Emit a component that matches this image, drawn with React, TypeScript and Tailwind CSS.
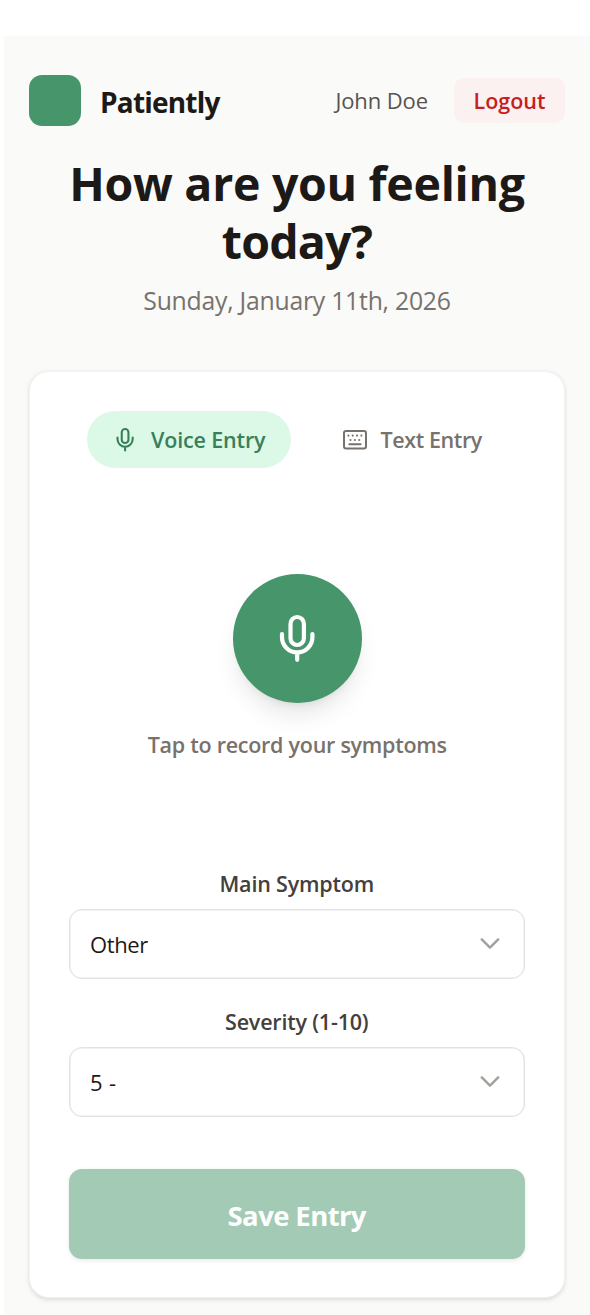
type IconProps = { className?: string };

function Microphone({ className }: IconProps) {
  return (
    <svg viewBox="0 0 52 52" fill="none" stroke="currentColor" strokeWidth="4.2" strokeLinecap="round" className={className}>
      <rect x="19.5" y="4" width="13.4" height="28" rx="6.7" />
      <path d="M11 21v3.2a15.2 15.2 0 0 0 30.4 0V21M26.2 40v6.8" />
    </svg>
  );
}

function Keyboard({ className }: IconProps) {
  return (
    <svg viewBox="0 0 24 20" fill="none" stroke="currentColor" strokeLinecap="round" className={className}>
      <rect x="1" y="1" width="22" height="17.6" rx="2" strokeWidth="2" />
      <path strokeWidth="2.1" d="M5.4 5.6h.01M9.7 5.6h.01M14 5.6h.01M18.4 5.6h.01M7.5 10h.01M11.9 10h.01M16.3 10h.01" />
      <path strokeWidth="1.9" d="M6.3 14.2h11.3" />
    </svg>
  );
}

function Field({ label, value, valueClass }: { label: string; value: string; valueClass: string }) {
  return (
    <div className="flex flex-col items-center">
      <label className="h-[34px] text-[21.5px] leading-[34px] font-semibold tracking-[-0.2px] whitespace-nowrap text-[#44403c]">{label}</label>
      <button className="mt-[8px] flex h-[70px] w-full items-center justify-between rounded-[13px] border border-[#e2e2e1] bg-white pr-[24px] pl-[20px] text-left text-[22px] text-[#1c1917] shadow-[inset_0_0_0_0.5px_#e5e5e5]">
        <span className={valueClass}>{value}</span>
        <svg viewBox="0 0 20 12" fill="none" stroke="#a3a09b" strokeWidth="2.4" strokeLinecap="round" strokeLinejoin="round" className="h-3 w-5">
          <path d="M1.8 1.4 10 9.6l8.2-8.2" />
        </svg>
      </button>
    </div>
  );
}

export default function App() {
  return (
    <div className="h-[1315px] overflow-hidden bg-white pt-[36px] pl-[4px] font-['Open_Sans','Noto_Sans',sans-serif]">
      <main className="h-full bg-[#fafaf9] pt-[38.5px] pr-[25px] pl-[25px]">
        <header className="flex h-[52px] items-center justify-between">
          <div className="flex items-center gap-[19.5px]">
            <div className="size-[51.5px] rounded-[13px] bg-[#47956b]" />
            <span className="pt-[2px] text-[28px] leading-[40px] font-bold tracking-[-0.8px] text-[#1c1917]">Patiently</span>
          </div>
          <div className="flex items-center gap-[26px]">
            <span className="pb-px text-[22px] tracking-[-0.1px] text-[#57534e]">John Doe</span>
            <button className="h-[45px] w-[111px] rounded-[10px] bg-[#fcf1f1] pt-[2px] text-[21.5px] font-semibold text-[#c81e1e]">Logout</button>
          </div>
        </header>
        <div className="mt-[28.5px] text-center">
          <h1 className="text-[46.5px] leading-[57.6px] font-bold tracking-[-0.3px] text-[#1c1917]">
            How are you feeling <span className="tracking-[-0.8px]">today?</span>
          </h1>
          <p className="mt-[9.5px] text-[24.8px] leading-[40px] tracking-[-0.25px] text-[#78716c]">Sunday, January 11th, 2026</p>
        </div>
        <section className="mt-[51px] h-[927.5px] rounded-[20px] border border-[#f3f3f2] bg-white pt-[39.5px] pr-[39.5px] pl-[39px] shadow-[0_1.6px_4px_rgba(0,0,0,0.12)]">
          <div className="flex gap-[26px] pl-[18px]">
            <button className="flex h-[57px] w-[204px] items-center rounded-full bg-[#dcf8e7] pl-[25px] text-[#38805a]">
              <Microphone className="size-[26px]" />
              <span className="ml-[13px] text-[21.5px] font-semibold tracking-[-0.15px] whitespace-nowrap">Voice Entry</span>
            </button>
            <button className="flex h-[57px] items-center pl-[25.5px] text-[#78716c]">
              <Keyboard className="h-[20px] w-[24px]" />
              <span className="ml-[14px] text-[21.5px] font-semibold tracking-[-0.4px] whitespace-nowrap">Text Entry</span>
            </button>
          </div>
          <div className="mt-[106px] flex flex-col items-center pl-px">
            <button className="flex size-[129px] items-center justify-center rounded-full bg-[#47956b] text-white shadow-[0_16px_24px_-5px_rgba(0,0,0,0.1),0_6px_10px_-6px_rgba(0,0,0,0.1)]">
              <Microphone className="size-[52px]" />
            </button>
            <p className="mt-[25px] text-[21.5px] leading-[34px] font-semibold tracking-[-0.26px] whitespace-nowrap text-[#78716c]">Tap to record your symptoms</p>
          </div>
          <div className="mt-[105px] flex flex-col gap-[26px]">
            <Field label="Main Symptom" value="Other" valueClass="pt-px tracking-[-0.4px]" />
            <Field label="Severity (1-10)" value="5 -" valueClass="pt-px tracking-[0.4px]" />
          </div>
          <button className="mt-[51.5px] h-[90px] w-full rounded-[13px] bg-[#a3cab5] pt-[4px] text-[27.5px] font-bold tracking-[-0.6px] text-white shadow-[0_1.6px_4px_rgba(0,0,0,0.08)]">Save Entry</button>
        </section>
      </main>
    </div>
  );
}
